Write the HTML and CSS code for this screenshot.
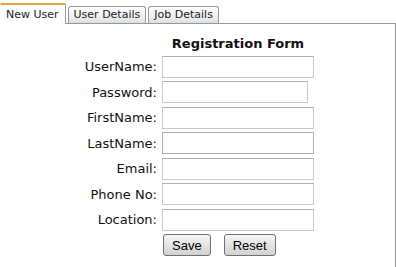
FILE: index.html
```html
<!DOCTYPE html>
<html>
<head>
    <title>Registration</title>
    <link rel="stylesheet" href="styles.css">
</head>
<body>
    <div class="tabs">
        <ul class="tab-list">
            <li class="tab active">New User</li>
            <li class="tab">User Details</li>
            <li class="tab">Job Details</li>
        </ul>
        <div class="panel">
            <form class="reg-form" id="regForm">
                <div class="title">Registration Form</div>

                <label for="userName">UserName:</label>
                <input type="text" id="userName" name="userName">

                <label for="password">Password:</label>
                <input type="password" id="password" name="password" class="short">

                <label for="firstName">FirstName:</label>
                <input type="text" id="firstName" name="firstName">

                <label for="lastName">LastName:</label>
                <input type="text" id="lastName" name="lastName" class="hover">

                <label for="email">Email:</label>
                <input type="text" id="email" name="email">

                <label for="phone">Phone No:</label>
                <input type="text" id="phone" name="phone">

                <label for="location">Location:</label>
                <input type="text" id="location" name="location">

                <div class="buttons">
                    <button type="button">Save</button>
                    <button type="reset">Reset</button>
                </div>
            </form>
        </div>
    </div>
</body>
</html>
```

FILE: styles.css
```css
body {
    margin: 0;
    background-color: #fff;
    font-family: "DejaVu Sans", Verdana, sans-serif;
    color: #111;
}
.tabs {
    width: 396px;
}
.tab-list {
    display: flex;
    align-items: flex-end;
    list-style: none;
    margin: 0;
    padding: 3px 0 0 0;
    border-bottom: 1px solid #919b9c;
    height: 20px;
}
.tab {
    font-size: 11px;
    height: 16px;
    line-height: 16px;
    padding: 0 5px;
    margin-right: 2px;
    border: 1px solid #919b9c;
    border-bottom: none;
    border-radius: 3px 3px 0 0;
    background: linear-gradient(#fff, #ececf0 70%, #dcdce4);
    color: #222;
}
.tab.active {
    height: 19px;
    line-height: 20px;
    margin-bottom: -1px;
    border: none;
    border-top: 2px solid #e8a33a;
    border-right: 1px solid #919b9c;
    background: #fff;
    padding: 0 6px;
    border-radius: 2px 2px 0 0;
}
.panel {
    height: 243px;
    border-right: 1px solid #919b9c;
}
.reg-form {
    display: grid;
    grid-template-columns: 157px 152px;
    column-gap: 5px;
    row-gap: 3.5px;
    align-items: center;
    padding-top: 12px;
}
.title {
    grid-column: 2;
    text-align: center;
    font-weight: bold;
    font-size: 13px;
    line-height: 16px;
}
.reg-form label {
    text-align: right;
    font-size: 13px;
}
.reg-form input {
    box-sizing: border-box;
    height: 22px;
    width: 152px;
    margin: 0;
    border: 1px solid #c9c9c9;
    border-top-color: #b0b0b0;
    background: #fff;
}
.reg-form input.short {
    width: 146px;
}
.reg-form input.hover {
    border-color: #9fb3c8;
}
.buttons {
    grid-column: 2;
    display: flex;
    gap: 13px;
    padding-top: 0;
    padding-left: 1px;
}
.buttons button {
    font-family: "Liberation Sans", Arial, sans-serif;
    font-size: 13px;
    height: 22px;
    padding: 0 8px;
    border: 1px solid #707070;
    border-radius: 3px;
    background: linear-gradient(#f6f6f6, #e4e4e4 50%, #d2d2d2);
    color: #000;
}
```
